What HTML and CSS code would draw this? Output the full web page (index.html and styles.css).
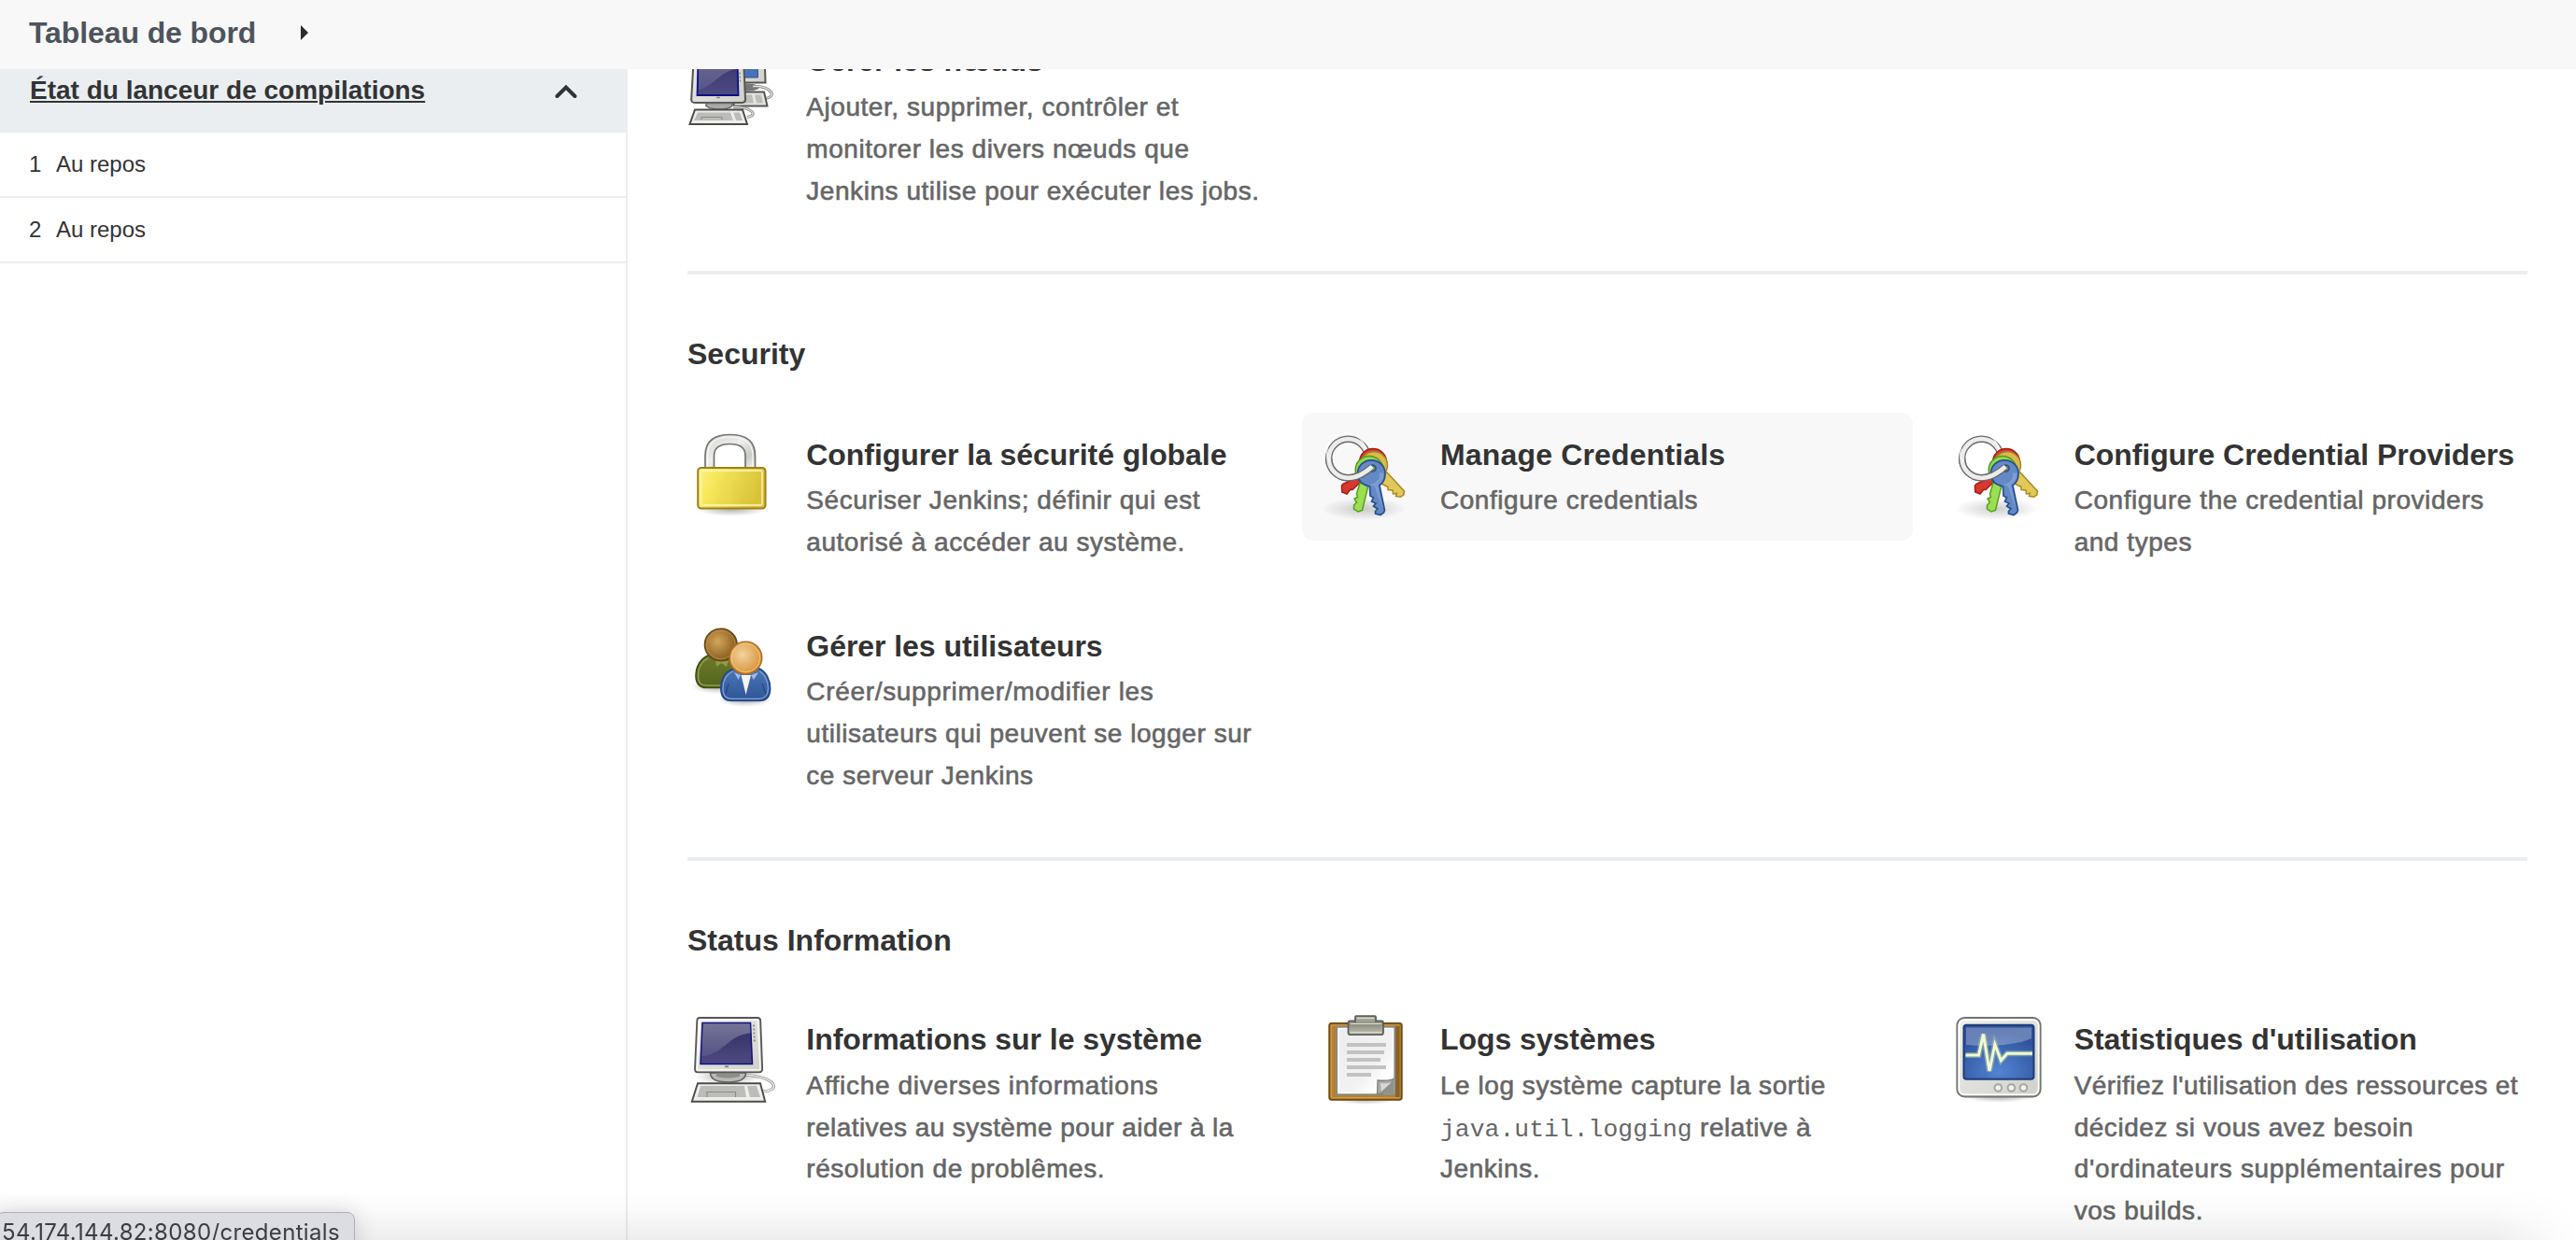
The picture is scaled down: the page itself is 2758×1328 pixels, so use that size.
FILE: index.html
```html
<!DOCTYPE html>
<html lang="fr">
<head>
<meta charset="utf-8">
<title>Administrer Jenkins</title>
<link rel="stylesheet" href="styles.css">
</head>
<body>
<svg class="defs" width="0" height="0" aria-hidden="true">
  <defs>
    <linearGradient id="gold" x1="0" y1="0" x2="1" y2=".25"><stop offset="0" stop-color="#fff08a"/><stop offset=".25" stop-color="#f8e95f"/><stop offset="1" stop-color="#d8c238"/></linearGradient>
    <linearGradient id="steel" x1="0" y1="0" x2="1" y2="1"><stop offset="0" stop-color="#d3d7cf"/><stop offset=".45" stop-color="#eeeeec"/><stop offset=".75" stop-color="#c9cdc6"/><stop offset="1" stop-color="#f2f2f0"/></linearGradient>
    <linearGradient id="case" x1="0" y1="0" x2="1" y2="1"><stop offset="0" stop-color="#f0f0ee"/><stop offset="1" stop-color="#cfd0ca"/></linearGradient>
    <linearGradient id="screen" x1="0" y1="0" x2="0" y2="1"><stop offset="0" stop-color="#2e2e62"/><stop offset="1" stop-color="#4d4a82"/></linearGradient>
    <linearGradient id="glare" x1="0" y1="0" x2="0" y2="1"><stop offset="0" stop-color="#fff" stop-opacity=".34"/><stop offset="1" stop-color="#fff" stop-opacity=".08"/></linearGradient>
    <radialGradient id="shadow"><stop offset="0" stop-color="#000" stop-opacity=".32"/><stop offset="1" stop-color="#000" stop-opacity="0"/></radialGradient>
    <radialGradient id="brown" cx=".4" cy=".4" r=".6"><stop offset="0" stop-color="#d6a55a"/><stop offset="1" stop-color="#855c20"/></radialGradient>
    <radialGradient id="peach" cx=".4" cy=".4" r=".6"><stop offset="0" stop-color="#f2d3a0"/><stop offset="1" stop-color="#d9963a"/></radialGradient>
    <linearGradient id="green" x1="0" y1="0" x2="0" y2="1"><stop offset="0" stop-color="#6f7a2c"/><stop offset="1" stop-color="#52651a"/></linearGradient>
    <linearGradient id="blue" x1="0" y1="0" x2="0" y2="1"><stop offset="0" stop-color="#4a76b8"/><stop offset="1" stop-color="#2f5596"/></linearGradient>
    <linearGradient id="paper" x1="0" y1="0" x2="1" y2="1"><stop offset="0" stop-color="#ececec"/><stop offset=".6" stop-color="#f2f2f2"/><stop offset=".8" stop-color="#fff"/><stop offset="1" stop-color="#ddd"/></linearGradient>
    <linearGradient id="clip" x1="0" y1="0" x2="0" y2="1"><stop offset="0" stop-color="#b4b5a6"/><stop offset=".45" stop-color="#8e8f80"/><stop offset="1" stop-color="#c2c3b8"/></linearGradient>
    <radialGradient id="scope" cx=".5" cy=".85" r=".7"><stop offset="0" stop-color="#5384d2"/><stop offset="1" stop-color="#2f539c"/></radialGradient>

    <symbol id="i-keys" viewBox="0 0 96 96">
      <ellipse cx="45" cy="84" rx="45" ry="12" fill="url(#shadow)" opacity=".6"/>
      <circle cx="28.500" cy="30" r="20.800" fill="none" stroke="#6a6a6a" stroke-width="7.400"/>
      <circle cx="28.500" cy="30" r="20.800" fill="none" stroke="#ececec" stroke-width="4.800"/>
      <path d="M38 50 23 57.300 21.500 59 21.800 66 27 68 30.500 63.500 33 63.500 42 55Z" fill="#d9382e" stroke="#a51d16" stroke-width="1.500"/>
      <circle cx="55" cy="34" r="14.500" fill="#dd3b30" stroke="#a51d16" stroke-width="1.500"/>
      <path d="M70 45 88.500 65 87.800 69 84.500 71.300 79.500 70.500 80.500 67.500 76.500 68 76 64 71 63.500 71 60.500 64 57 60 46Z" fill="#e2c858" stroke="#a88a20" stroke-width="1.500"/>
      <circle cx="56" cy="37.200" r="14.500" fill="#dcb94c" stroke="#a8832a" stroke-width="1.500"/>
      <path d="M41 56 37.500 68 38.500 71.500 35 73 37.500 77 34.500 80 34.500 84 39 87 43.500 85.500 50.500 57Z" fill="#9bde52" stroke="#559f20" stroke-width="1.500"/>
      <circle cx="51" cy="42.300" r="14.800" fill="#93d94a" stroke="#4d9a20" stroke-width="1.500"/>
      <path d="M51.500 60C43 58 38.500 53 38.500 46.500 38.500 38 45 31.800 53.200 31.800 61.500 31.800 68 38 68 46.500 68 52 65.500 56.500 62 58.800L67.500 85.500 66.500 88 63 90.500 57.500 89 57.500 86.500 60 84 55.500 81 58 78 53.500 76 55.500 72 52 70Z" fill="#6489c6" stroke="#27508f" stroke-width="1.700"/>
      <path d="M51 58C59 57 63 52 62 45L66.300 46C66.300 52 64 55.500 60 58.500L65.500 84 61 72 57 60Z" fill="#8badd9" opacity=".6"/>
      <circle cx="54.500" cy="40.500" r="3.600" fill="#66883e" stroke="#27508f" stroke-width="1.500"/>
      <path d="M7.700 30A20.800 20.800 0 0 0 28.500 50.800C38 50.800 46 46 53.500 39.500" fill="none" stroke="#6a6a6a" stroke-width="7.400"/>
      <path d="M7.700 29A20.800 20.800 0 0 0 28.500 50.800C38 50.800 46 46 54.200 38.800" fill="none" stroke="#ececec" stroke-width="4.800"/>
      <path d="M8.500 34A20.800 20.800 0 1 1 47 20" fill="none" stroke="#fff" stroke-width="1.500" opacity=".7"/>
    </symbol>
  </defs>
</svg>

<header class="breadcrumbs">
  <a class="crumb">Tableau de bord</a>
  <svg class="crumb-arrow" width="8" height="16" viewBox="0 0 8 16"><path d="M0 0 8 8 0 16Z" fill="#2b2b2b"/></svg>
</header>

<div class="page">
  <aside class="side">
    <div class="side-head">
      <a class="side-title">État du lanceur de compilations</a>
      <svg class="chevron" width="24" height="16" viewBox="0 0 24 16"><path d="M2.500 13 12 3.500 21.500 13" fill="none" stroke="#333" stroke-width="4" stroke-linecap="round"/></svg>
    </div>
    <div class="executor"><span class="num">1</span><span>Au repos</span></div>
    <div class="executor"><span class="num">2</span><span>Au repos</span></div>
  </aside>

  <main class="main">
    <section class="group">
      <div class="items">
        <a class="item">
          <svg class="icon" viewBox="0 1.500 96 96">
            <path d="M40 2H82L83.500 51H40Z" fill="url(#case)" stroke="#555753" stroke-width="2"/>
            <path d="M44 8H74.500L75.500 45.500H44Z" fill="#4a72b8" stroke="#2f5596"/>
            <ellipse cx="64" cy="56" rx="13" ry="4" fill="#777"/>
            <path d="M70 55C88 54 98 66 83 68" fill="none" stroke="#8a8a88" stroke-width="3"/>
            <path d="M70 55C88 54 98 66 83 68" fill="none" stroke="#e6e6e4" stroke-width="1.200"/>
            <path d="M46 61H82L85.500 76H50Z" fill="#e4e4e0" stroke="#555753" stroke-width="2"/>
            <path d="M60 64H69L71 73H61ZM72 64H79L81 73H74Z" fill="#bdbdb9"/>
            <path d="M8 2H59L62 69Q62 72.500 58 72.500H8Q4 72.500 4.200 69Z" fill="url(#case)" stroke="#555753" stroke-width="2"/>
            <path d="M12 8H53L54.500 64.500H10.500Z" fill="url(#screen)" stroke="#101080" stroke-width="1.800"/>
            <path d="M12 8H53V36C35 39 29 54 12 59Z" fill="url(#glare)"/>
            <path d="M56 40v2M56.200 44v2M56.400 48v2M31 67h4" stroke="#888" stroke-width="1.500"/>
            <path d="M20 73H48V76C42 81 26 81 20 76Z" fill="#a9aaa6" stroke="#666" stroke-width="1.500"/>
            <path d="M49 77C66 77 78 85 64 88" fill="none" stroke="#8a8a88" stroke-width="3"/>
            <path d="M49 77C66 77 78 85 64 88" fill="none" stroke="#e6e6e4" stroke-width="1.200"/>
            <path d="M8 80H59L64 95.500H2.500Z" fill="#eeeeec" stroke="#4b4d49" stroke-width="2"/>
            <path d="M11 83H46L49 91.500H7ZM49 83H56L59 91.500H52Z" fill="#bcbdb9"/>
            <path d="M15 91V88H37V91" fill="none" stroke="#8a8a88"/>
          </svg>
          <div class="text">
            <div class="title">Gérer les nœuds</div>
            <div class="desc">Ajouter, supprimer, contrôler et<br>monitorer les divers nœuds que<br>Jenkins utilise pour exécuter les jobs.</div>
          </div>
        </a>
      </div>
    </section>

    <section class="group security">
      <h2 class="heading">Security</h2>
      <div class="items">
        <a class="item">
          <svg class="icon" viewBox="0 0 96 96">
            <ellipse cx="47" cy="84" rx="38" ry="8" fill="url(#shadow)"/>
            <path d="M19 41V27C19 11 29 4.500 45.500 4.500S72.500 11 72.500 27V41H62V27C62 18 56 14.500 45.500 14.500S28.500 18 28.500 27V41Z" fill="url(#steel)" stroke="#72756f" stroke-width="1.700"/>
            <path d="M21.500 39V27C21.500 13 31 7 45.500 7S70 13 70 27V39" fill="none" stroke="#fff" stroke-width="1.200" opacity=".8"/>
            <rect x="11.200" y="40" width="72.300" height="43.500" rx="3.500" fill="url(#gold)" stroke="#a07f1a" stroke-width="2"/>
            <rect x="14.500" y="43" width="65.500" height="37" rx="1.500" fill="none" stroke="#fff8b8" stroke-width="1.800" opacity=".75"/>
          </svg>
          <div class="text">
            <div class="title">Configurer la sécurité globale</div>
            <div class="desc">Sécuriser Jenkins; définir qui est<br>autorisé à accéder au système.</div>
          </div>
        </a>
        <a class="item hovered">
          <svg class="icon"><use href="#i-keys"/></svg>
          <div class="text">
            <div class="title wide">Manage Credentials</div>
            <div class="desc">Configure credentials</div>
          </div>
        </a>
        <a class="item">
          <svg class="icon"><use href="#i-keys"/></svg>
          <div class="text">
            <div class="title">Configure Credential Providers</div>
            <div class="desc">Configure the credential providers<br>and types</div>
          </div>
        </a>
        <a class="item">
          <svg class="icon" viewBox="0 0 96 96">
            <ellipse cx="32" cy="69" rx="28" ry="8" fill="url(#shadow)"/>
            <ellipse cx="62" cy="83" rx="29" ry="8" fill="url(#shadow)"/>
            <path d="M22 36C13 40 9 49 9 58 9 67 14 70.500 20 70.500H48L54 40 46 35Z" fill="url(#green)" stroke="#3d4d10" stroke-width="1.600"/>
            <path d="M22 39C14 43 11.500 50 11.500 58 11.500 65 15 68.200 20 68.200H40" fill="none" stroke="#9aa860" stroke-width="1.200"/>
            <path d="M30 42 31.500 48 36 44 42 48 44 42Z" fill="#8f9c4c"/>
            <ellipse cx="35.800" cy="24.500" rx="17.300" ry="17.200" fill="url(#brown)" stroke="#6b4713" stroke-width="1.600"/>
            <ellipse cx="35.800" cy="24.500" rx="15.300" ry="15.200" fill="none" stroke="#c59a57" opacity=".7"/>
            <path d="M48 51C39 54 35.800 63 35.800 71 35.800 81 41 84.500 47 84.500H77C84 84.500 88.600 81 88.600 71 88.600 63 85 54 77 50Z" fill="url(#blue)" stroke="#244785" stroke-width="1.600"/>
            <path d="M49 53C41 56 38 64 38 71 38 79 42 82.300 47 82.300H77C82 82.300 86.400 79 86.400 71 86.400 64 83 56 77 53" fill="none" stroke="#86a5d6" stroke-width="1.200"/>
            <path d="M57.500 57H68L62.600 78Z" fill="#f4f4f4"/>
            <path d="M50 54 54.500 62 57 57ZM76 54 71 62 68 57Z" fill="#9fbbe0"/>
            <path d="M44 66 41 77M80 66 84 77" stroke="#244785" stroke-width="1.200"/>
            <ellipse cx="62.400" cy="38.500" rx="17.300" ry="17.200" fill="url(#peach)" stroke="#b5701c" stroke-width="1.600"/>
            <ellipse cx="62.400" cy="38.500" rx="15.300" ry="15.200" fill="none" stroke="#f4cf94" opacity=".8"/>
          </svg>
          <div class="text">
            <div class="title">Gérer les utilisateurs</div>
            <div class="desc"><span class="loose">Créer/supprimer/modifier les</span><br>utilisateurs qui peuvent se logger sur<br>ce serveur Jenkins</div>
          </div>
        </a>
      </div>
    </section>

    <section class="group status">
      <h2 class="heading">Status Information</h2>
      <div class="items">
        <a class="item">
          <svg class="icon" viewBox="0 0 96 96">
            <ellipse cx="44" cy="66" rx="36" ry="9" fill="url(#shadow)"/>
            <path d="M61 64C80 66 91 70 92.300 75.500 93 80 87 81.500 80 82" fill="none" stroke="#8a8a88" stroke-width="3"/>
            <path d="M61 64C80 66 91 70 92.300 75.500 93 80 87 81.500 80 82" fill="none" stroke="#eeeeec" stroke-width="1.400"/>
            <path d="M24.500 62H62.500C62.500 69 56 72 43.500 72S24.500 69 24.500 62Z" fill="#b8b9b4" stroke="#666864" stroke-width="1.600"/>
            <path d="M31 61H56V66Q43 69 31 66Z" fill="#8d8e8a"/>
            <path d="M13 3H75Q78 3 78.200 6L80.200 58Q80 61.300 77 61.300H11Q8 61.300 8 58L10.300 6Q10.500 3 13 3Z" fill="url(#case)" stroke="#555753" stroke-width="1.800"/>
            <path d="M13 5.200H75.500L78 58.800H10.300Z" fill="none" stroke="#fff" stroke-width="1.200"/>
            <path d="M16 8.500H67.500L69.500 52.500H14Z" fill="url(#screen)" stroke="#101080" stroke-width="1.500"/>
            <path d="M16.800 9.300H66.800L67.500 19.500C42 22 40 42 15 44.500Z" fill="url(#glare)"/>
            <path d="M71 10.500v2M71.200 14.500v2M71.400 18.500v2M71.600 22.500v2M71.800 26.500v2M40 55.200h4" stroke="#8a8a88" stroke-width="2"/>
            <path d="M11 73.200H78L83.200 92.800H4.800Z" fill="#eeeeec" stroke="#4b4d49" stroke-width="1.900"/>
            <path d="M14 76H61L63 88H10.500ZM64 76H74L78 88H67Z" fill="#bcbdb9"/>
            <path d="M21 88V82.500H51.500V88" fill="none" stroke="#8a8a88" stroke-width="1.200"/>
          </svg>
          <div class="text">
            <div class="title">Informations sur le système</div>
            <div class="desc"><span class="loose">Affiche diverses informations</span><br><span class="tight">relatives au système pour aider à la</span><br>résolution de problêmes.</div>
          </div>
        </a>
        <a class="item">
          <svg class="icon" viewBox="0 0 96 96">
            <ellipse cx="47" cy="90" rx="34" ry="6" fill="url(#shadow)"/>
            <rect x="8.200" y="8.800" width="77.600" height="82" rx="2.500" fill="#b5812f" stroke="#6e4a14" stroke-width="1.800"/>
            <path d="M79 11H83.500V88.500H79Z" fill="#8b6224"/>
            <path d="M10.500 88.500V11H83.500M10.500 88.500H83.500" fill="none" stroke="#d39c49" stroke-width="1.200"/>
            <rect x="16.300" y="12.800" width="62" height="72.400" fill="url(#paper)" stroke="#888a85" stroke-width="1.800"/>
            <rect x="18.200" y="14.600" width="58.200" height="68.800" fill="none" stroke="#fff" stroke-width="1.200"/>
            <path d="M27 30H69V34H27ZM27 38H67V42H27ZM27 46H63V50H27ZM27 54H69V58H27ZM27 62H53V66H27Z" fill="#c2c2c2"/>
            <path d="M77.500 68C74 71 67 70.500 60 70L59.500 84.500H66Z" fill="#aaaba7" stroke="#80827e" stroke-width="1.300"/>
            <path d="M77.500 69 61 84.500H77.500Z" fill="#8f918c"/>
            <path d="M63 73Q70 74 75 72L64 82Z" fill="#d7d8d5"/>
            <path d="M36 8V2Q36 1.200 37 1.200H57Q58 1.200 58 2V6.500H64Q66 6.500 66 8.500V19Q66 21.200 63.500 21.200H31Q28.500 21.200 28.500 19V8.500Q28.500 6.500 30.500 6.500H36Z" fill="url(#clip)" stroke="#5f605b" stroke-width="1.800"/>
            <path d="M31 9.500H64M31 18.500H64M38 3.500H56" stroke="#dcdcd2" stroke-width="1.200"/>
          </svg>
          <div class="text">
            <div class="title">Logs systèmes</div>
            <div class="desc">Le log système capture la sortie<br><code>java.util.logging</code> relative à<br>Jenkins.</div>
          </div>
        </a>
        <a class="item">
          <svg class="icon" viewBox="0 0 96 96">
            <ellipse cx="47" cy="87" rx="38" ry="7" fill="url(#shadow)"/>
            <rect x="2.300" y="3" width="89.400" height="84.500" rx="8" fill="url(#case)" stroke="#73756f" stroke-width="1.800"/>
            <rect x="4.500" y="5.200" width="85" height="80" rx="6" fill="none" stroke="#fff" stroke-width="1.500"/>
            <rect x="9.500" y="10.800" width="75" height="58" rx="3" fill="url(#scope)" stroke="#1f3c78" stroke-width="2"/>
            <path d="M12 13.500H82V25C66 33 32 34 12 32Z" fill="#fff" opacity=".28"/>
            <path d="M11.500 43H25.500L30.500 20.500 37 60 42.800 31.500 49.400 48.700 56 41.300H83" fill="none" stroke="#b5d8a0" stroke-width="6" opacity=".45"/>
            <path d="M11.500 43H25.500L30.500 20.500 37 60 42.800 31.500 49.400 48.700 56 41.300H83" fill="none" stroke="#f2fad0" stroke-width="3"/>
            <g fill="#f2f2f0" stroke="#a5a7a1" stroke-width="2"><circle cx="46.300" cy="78" r="3.800"/><circle cx="60.400" cy="78" r="3.800"/><circle cx="73.500" cy="78" r="3.800"/></g>
          </svg>
          <div class="text">
            <div class="title">Statistiques d'utilisation</div>
            <div class="desc"><span class="tight">Vérifiez l'utilisation des ressources et</span><br>décidez si vous avez besoin<br><span class="loose">d'ordinateurs supplémentaires pour</span><br>vos builds.</div>
          </div>
        </a>
      </div>
    </section>
  </main>
</div>

<div class="bottom-shade"></div>
<div class="link-status">54.174.144.82:8080/credentials</div>
</body>
</html>
```

FILE: styles.css
```css
* { box-sizing: border-box; }
body {
  margin: 0;
  height: 1328px;
  overflow: hidden;
  background: #fff;
  color: #333;
  font-family: "Liberation Sans", Arial, sans-serif;
}
.defs { position: absolute; }

.breadcrumbs {
  height: 74px;
  padding: 0 0 5px 31px;
  display: flex;
  align-items: center;
  background: #f8f8f8;
}
.crumb {
  width: 291px;
  padding-top: 1px;
  font-size: 32px;
  font-weight: bold;
  letter-spacing: -.1px;
  color: #4d545d;
}

.page {
  display: grid;
  grid-template-columns: 672px 1fr;
  height: 1254px;
  overflow: hidden;
}

.side { border-right: 2px solid #eaeef1; }
.side-head {
  display: flex;
  justify-content: space-between;
  width: 672px;
  height: 68px;
  padding: 0 54px 0 32px;
  background: #eaeef1;
}
.side-title {
  padding-top: 1px;
  font-size: 28px;
  line-height: 44.8px;
  font-weight: bold;
  text-decoration: underline;
  text-decoration-thickness: 2px;
  text-underline-offset: 2px;
}
.chevron { margin-top: 16px; }
.executor {
  display: flex;
  height: 70px;
  padding-left: 31px;
  font-size: 24px;
  line-height: 67px;
  border-bottom: 2px solid #eaeef1;
}
.num { width: 29px; }

.main { padding: 0 52px 0 64px; }
.group { margin-bottom: 45px; }
.group:first-child {
  margin-top: -52.600px;
  margin-bottom: 43.100px;
}
.group + .group {
  border-top: 4px solid #eaeef1;
  padding-top: 61px;
}
.heading {
  margin: 0 0 39px;
  font-size: 32px;
  line-height: 48px;
  font-weight: bold;
}
.items {
  display: grid;
  grid-template-columns: repeat(3, 1fr);
  align-items: start;
  gap: 24px;
  margin: 0 -21px;
}
.status .heading { margin-bottom: 38px; }
.item {
  display: flex;
  gap: 31.300px;
  padding: 20px 0 20px 21px;
  border-radius: 12px;
  white-space: nowrap;
}
.security .item { padding-top: 20.400px; padding-bottom: 19.400px; }
.hovered { background: #f8f8f8; }
.icon {
  flex: none;
  width: 96px;
  height: 96px;
  margin: -2px 0 -20px;
  overflow: visible;
}
.title {
  margin-bottom: 3.600px;
  font-size: 32px;
  line-height: 48px;
  font-weight: bold;
  letter-spacing: -.05px;
}
.title.wide { letter-spacing: .17px; }
.desc {
  font-size: 28px;
  line-height: 44.800px;
  letter-spacing: .55px;
  color: #666;
  -webkit-text-stroke: .6px #666;
}
.loose { letter-spacing: .68px; }
.tight { letter-spacing: .43px; }
code {
  font-family: "Liberation Mono", "Courier New", monospace;
  font-size: 26.450px;
  line-height: 1;
  letter-spacing: 0;
  -webkit-text-stroke: 0;
}

.bottom-shade {
  position: fixed;
  left: 0;
  right: 0;
  bottom: 0;
  height: 52px;
  background: linear-gradient(rgba(0,0,0,0), rgba(0,0,0,.02) 40%, rgba(0,0,0,.07));
  -webkit-mask-image: linear-gradient(to left, transparent, #000 90px);
  mask-image: linear-gradient(to left, transparent, #000 90px);
}
.link-status {
  position: fixed;
  left: -4px;
  top: 1298px;
  width: 384px;
  height: 50px;
  padding-left: 5px;
  border: 1px solid #b0b0b3;
  border-radius: 8px;
  background: #dcdde2;
  box-shadow: 0 0 24px rgba(0,0,0,.16);
  color: #3c3d41;
  font: 24px/42px Inter, sans-serif;
  letter-spacing: .34px;
  white-space: nowrap;
}
```
